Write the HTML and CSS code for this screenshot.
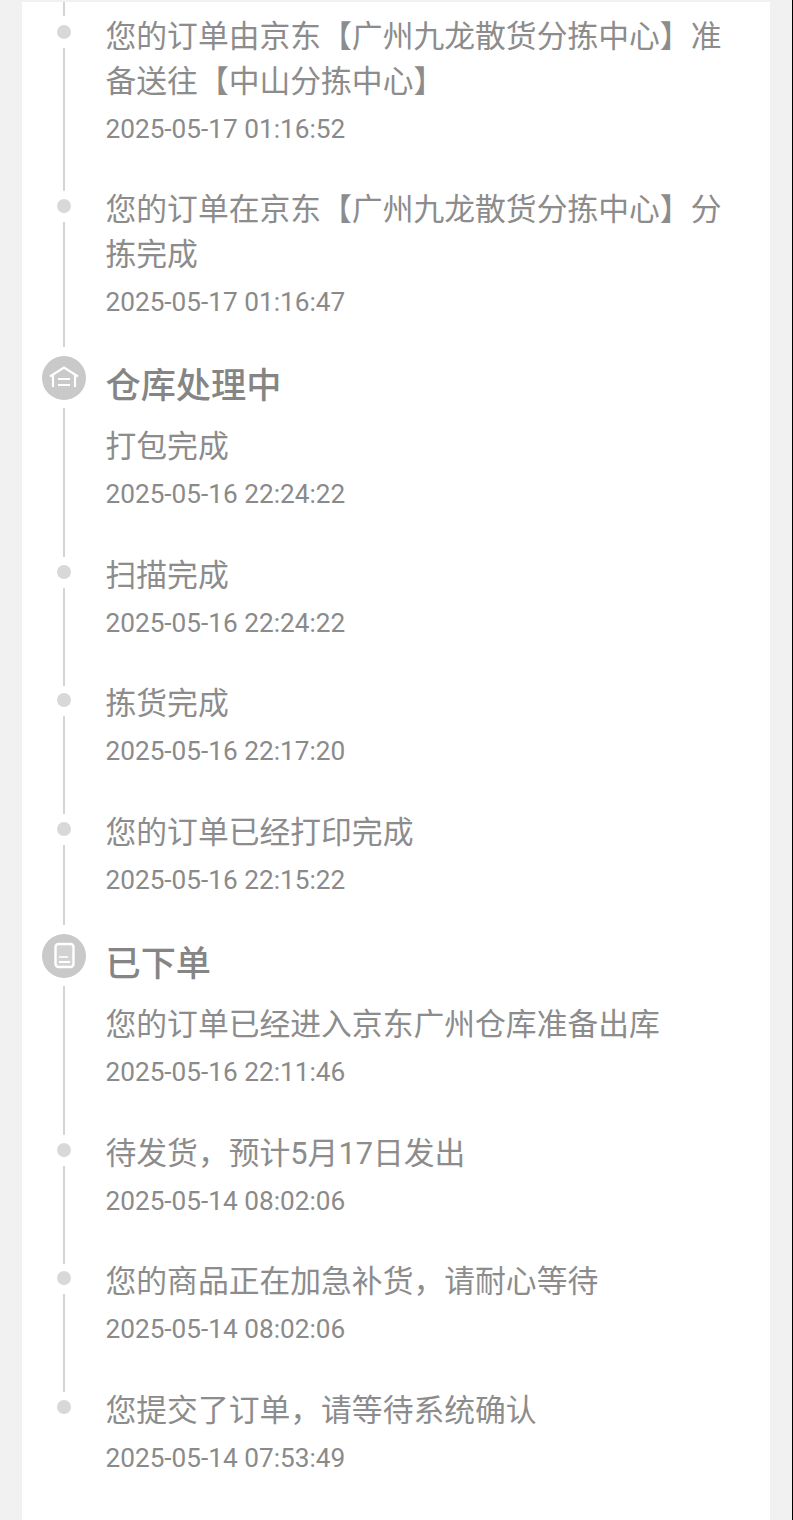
FILE: index.html
```html
<!DOCTYPE html>
<html>
  <head>
    <title>物流详情</title>
    <meta name="viewport" content="width=device-width, initial-scale=1"/>
    <link rel="stylesheet" href="styles.css">
  </head>
  <body>
    <div class="page">
      <div class="card">

        <div class="node node-first">
          <div class="rail">
            <span class="stub"></span>
            <span class="dot"></span>
            <span class="line"></span>
          </div>
          <div class="body">
            <p class="msg">您的订单由京东【广州九龙散货分拣中心】准备送往【中山分拣中心】</p>
            <p class="time">2025-05-17 01:16:52</p>
          </div>
        </div>

        <div class="node node-end">
          <div class="rail">
            <span class="dot"></span>
            <span class="line"></span>
          </div>
          <div class="body">
            <p class="msg">您的订单在京东【广州九龙散货分拣中心】分拣完成</p>
            <p class="time">2025-05-17 01:16:47</p>
          </div>
        </div>

        <div class="node node-head">
          <div class="rail">
            <span class="badge">
              <svg viewBox="0 0 44 44" width="44" height="44" fill="none" stroke="#fff" stroke-width="2.2">
                <path d="M8 20.5 22 11.5l14 9"/>
                <path d="M11 19v12M33 19v12"/>
                <path d="M16 23h12M16 29h12"/>
              </svg>
            </span>
            <span class="line"></span>
          </div>
          <div class="body">
            <h2 class="head">仓库处理中</h2>
            <p class="msg">打包完成</p>
            <p class="time">2025-05-16 22:24:22</p>
          </div>
        </div>

        <div class="node">
          <div class="rail">
            <span class="dot"></span>
            <span class="line"></span>
          </div>
          <div class="body">
            <p class="msg">扫描完成</p>
            <p class="time">2025-05-16 22:24:22</p>
          </div>
        </div>

        <div class="node">
          <div class="rail">
            <span class="dot"></span>
            <span class="line"></span>
          </div>
          <div class="body">
            <p class="msg">拣货完成</p>
            <p class="time">2025-05-16 22:17:20</p>
          </div>
        </div>

        <div class="node node-end">
          <div class="rail">
            <span class="dot"></span>
            <span class="line"></span>
          </div>
          <div class="body">
            <p class="msg">您的订单已经打印完成</p>
            <p class="time">2025-05-16 22:15:22</p>
          </div>
        </div>

        <div class="node node-head">
          <div class="rail">
            <span class="badge">
              <svg viewBox="0 0 44 44" width="44" height="44" fill="none" stroke="#fff">
                <rect x="13.5" y="10" width="18" height="23" rx="3" stroke-width="2.4" fill="#d2d2d2"/>
                <path d="M17 23h9" stroke-width="1.6"/>
                <path d="M17 28h11" stroke-width="2"/>
              </svg>
            </span>
            <span class="line"></span>
          </div>
          <div class="body">
            <h2 class="head">已下单</h2>
            <p class="msg">您的订单已经进入京东广州仓库准备出库</p>
            <p class="time">2025-05-16 22:11:46</p>
          </div>
        </div>

        <div class="node">
          <div class="rail">
            <span class="dot"></span>
            <span class="line"></span>
          </div>
          <div class="body">
            <p class="msg">待发货，预计5月17日发出</p>
            <p class="time">2025-05-14 08:02:06</p>
          </div>
        </div>

        <div class="node">
          <div class="rail">
            <span class="dot"></span>
            <span class="line"></span>
          </div>
          <div class="body">
            <p class="msg">您的商品正在加急补货，请耐心等待</p>
            <p class="time">2025-05-14 08:02:06</p>
          </div>
        </div>

        <div class="node node-last">
          <div class="rail">
            <span class="dot"></span>
          </div>
          <div class="body">
            <p class="msg">您提交了订单，请等待系统确认</p>
            <p class="time">2025-05-14 07:53:49</p>
          </div>
        </div>

      </div>
    </div>
  </body>
</html>
```

FILE: styles.css
```css
* {box-sizing: border-box;}

html {
  background-color: #000;
}

body {
  margin: 0;
  font-family: Roboto, "Noto Sans CJK SC", sans-serif;
}

.page {
  width: 792px;
  height: 1520px;
  padding: 2px 22px 0 22px;
  background-color: #f1f1f1;
  overflow: hidden;
}

.card {
  height: 100%;
  background-color: #fff;
}

.node {
  display: flex;
}

.rail {
  flex: none;
  width: 84px;
  display: flex;
  flex-direction: column;
  align-items: center;
}

.dot {
  flex: none;
  width: 14px;
  height: 14px;
  margin-top: 12px;
  border-radius: 50%;
  background-color: #d8d8d8;
}

.line {
  flex: 1;
  width: 1.5px;
  margin-top: 9px;
  margin-bottom: -4.5px;
  background-color: #d4d4d4;
}

.stub {
  flex: none;
  width: 1.5px;
  height: 14px;
  background-color: #d4d4d4;
}

.node-first .dot {
  margin-top: 9px;
}

.node-first .body {
  padding-top: 12px;
  padding-bottom: 38.5px;
}

.node-end .line {
  margin-bottom: 13px;
}

.badge {
  flex: none;
  width: 44px;
  height: 44px;
  margin-top: -4px;
  border-radius: 50%;
  background-color: #c9c9c9;
}

.badge + .line {
  margin-top: 8px;
}

.badge svg {
  display: block;
}

.body {
  flex: 1;
  margin-left: -0.5px;
  padding-bottom: 39.4px;
  padding-right: 40px;
}

.head {
  margin: 0 0 12.5px 0;
  font-size: 35.2px;
  line-height: 52px;
  font-weight: 500;
  color: #858585;
}

.msg {
  margin: 0;
  font-size: 30.8px;
  line-height: 45px;
  color: #8c8c8c;
}

.time {
  margin: 7px 0 0 0;
  font-size: 26.2px;
  line-height: 37px;
  color: #8a8a8a;
}
```
